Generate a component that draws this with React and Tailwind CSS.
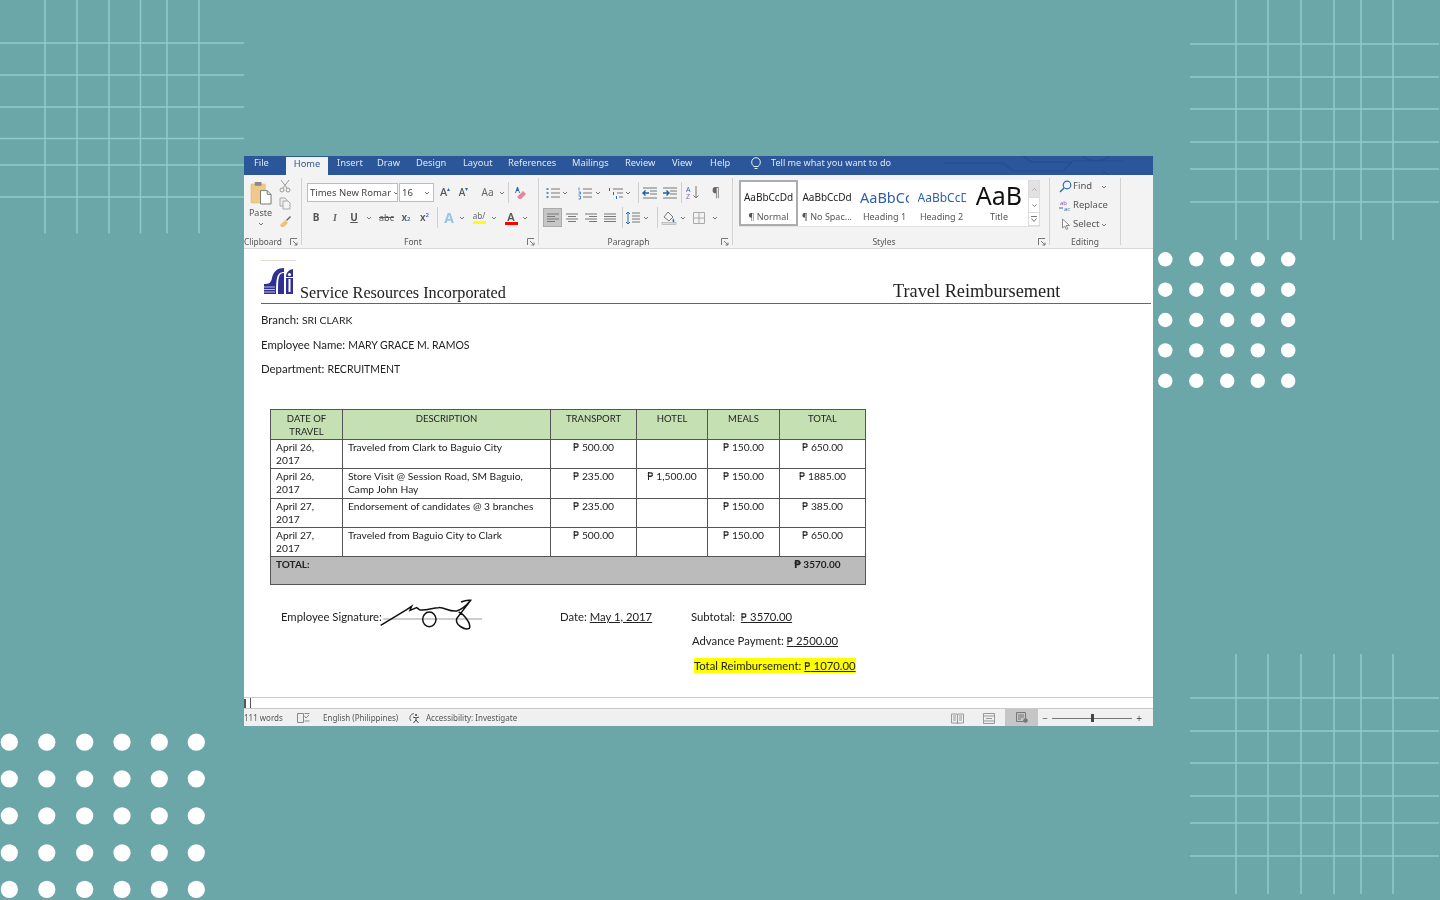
import React from "react";

const Box = ({ c = "", children }) => <div className={"flex items-center justify-center shrink-0 " + c}>{children}</div>;
const Chev = ({ c = "w-[8px]" }) => (
  <Box c={c}><svg width="6" height="4" viewBox="0 0 6 4"><path d="M1 1l2 2 2-2" fill="none" stroke="#777" strokeWidth="1" /></svg></Box>
);
const VSep = ({ c = "" }) => <div className={"w-px h-[21px] bg-[#cfcfcf] shrink-0 " + c} />;
const Launcher = () => (
  <Box c="w-[14px]"><svg width="8" height="8" viewBox="0 0 8 8"><path d="M.5 7V.5H7M3 3l4 4M4.5 7H7V4.5" fill="none" stroke="#777" strokeWidth="1" /></svg></Box>
);
const GroupSep = () => <div className="w-px bg-[#d2d2d2] my-[3px] shrink-0" />;
const Label = ({ children }) => <div className="flex-1 text-center text-[8.5px] leading-[12px] text-[#555]">{children}</div>;

const Bullets = () => (
  <svg width="16" height="14" viewBox="0 0 16 14">
    <path d="M6 3h9M6 7h9M6 11h9" stroke="#777" /><path d="M1.5 3h2M1.5 7h2M1.5 11h2" stroke="#2b6cb0" strokeWidth="1.6" />
  </svg>
);
const Numbered = () => (
  <svg width="16" height="14" viewBox="0 0 16 14">
    <path d="M6 3h9M6 7h9M6 11h9" stroke="#777" /><path d="M2 1.5v3M1.5 6h2v2h-2M1.5 10h2v3h-2" stroke="#2b6cb0" fill="none" strokeWidth=".8" />
  </svg>
);
const Multi = () => (
  <svg width="16" height="14" viewBox="0 0 16 14">
    <path d="M5 3h10M9 7h6M11 11h4" stroke="#777" /><path d="M1.5 2v3M5.5 6v3M8.5 10v3" stroke="#2b6cb0" />
  </svg>
);
const Indent = ({ flip }) => (
  <svg width="16" height="14" viewBox="0 0 16 14">
    <path d="M1 2h14M8 5h7M8 8h7M1 12h14" stroke="#777" />
    {flip ? <path d="M7 7H1.5M3.5 4.5L1 7l2.500 2.500" stroke="#1f5fa8" strokeWidth="1.4" fill="none" /> : <path d="M1 7h5.500M4.500 4.500L7 7 4.500 9.500" stroke="#1f5fa8" strokeWidth="1.4" fill="none" />}
  </svg>
);
const Align = ({ kind }) => {
  const d = {
    left: "M2 3h12M2 5.500h8M2 8h12M2 10.500h8",
    center: "M2 3h12M4 5.500h8M2 8h12M4 10.500h8",
    right: "M2 3h12M6 5.500h8M2 8h12M6 10.500h8",
    justify: "M2 3h12M2 5.500h12M2 8h12M2 10.500h12",
  }[kind];
  return <svg width="16" height="14" viewBox="0 0 16 14"><path d={d} stroke="#777" /></svg>;
};

const Ribbon = () => (
  <div className="flex h-[74px] bg-[#f3f3f3] border-b border-[#d8d8d8] text-[#555]">
    {/* Clipboard */}
    <div className="w-[57px] flex flex-col shrink-0">
      <div className="h-[61px] flex">
        <div className="w-[33px] flex flex-col items-center pt-[6px]">
          <svg width="22" height="24" viewBox="0 0 23 25">
            <rect x="1" y="3" width="15" height="20" rx="1" fill="#efc98a" stroke="#d9b070" strokeWidth=".5" />
            <rect x="5" y="1" width="7" height="4" fill="#8a8a8a" />
            <path d="M11 10h7l4 4v10H11z" fill="#fff" stroke="#777" />
            <path d="M18 10v4h4" fill="none" stroke="#777" />
          </svg>
          <span className="text-[9px] leading-[13px] mt-[1px]">Paste</span>
          <Chev c="w-[8px] h-[9px]" />
        </div>
        <div className="flex-1 flex flex-col items-center pt-[3px] gap-[3px] pr-[8px]">
          <Box c="h-[15px]"><svg width="12" height="14" viewBox="0 0 12 14"><path d="M2 1l6 8M10 1L4 9" stroke="#999" /><circle cx="3" cy="11" r="2" fill="none" stroke="#999" /><circle cx="9" cy="11" r="2" fill="none" stroke="#999" /></svg></Box>
          <Box c="h-[15px]"><svg width="12" height="13" viewBox="0 0 12 13"><path d="M1 1h5l2 2v6H1z" fill="#eee" stroke="#aaa" /><path d="M4 4h5l2 2v6H4z" fill="#f3f3f3" stroke="#aaa" /></svg></Box>
          <Box c="h-[15px]"><svg width="13" height="13" viewBox="0 0 13 13"><path d="M1 10l5-5 3 3-4 4H2z" fill="#eec27a" /><path d="M7 5l4-4 1 1-4 4z" fill="#666" /></svg></Box>
        </div>
      </div>
      <div className="flex h-[12px]">
        <div className="flex-1 text-[8.3px] leading-[12px] whitespace-nowrap">Clipboard</div>
        <Launcher />
      </div>
    </div>
    <GroupSep />
    {/* Font */}
    <div className="w-[236px] flex flex-col shrink-0">
      <div className="h-[61px] pt-[8px] pl-[5px]">
        <div className="flex h-[19px] items-center">
          <div className="w-[91px] h-[19px] bg-white border border-[#bdbdbd] flex items-center pl-[2px] pt-[1px] text-[9.5px] text-[#444] whitespace-nowrap overflow-hidden">
            <span className="flex-1">Times New Romar</span><Chev c="w-[9px]" />
          </div>
          <div className="w-[35px] h-[19px] ml-[1px] bg-white border border-[#bdbdbd] flex items-center pl-[2px] pt-[1px] text-[9.5px] text-[#444]">
            <span className="flex-1">16</span><Chev c="w-[12px]" />
          </div>
          <Box c="w-[18px] ml-[2px] text-[11px] font-medium">A<span className="text-[6px] text-[#2b6cb0] -mt-[6px]">▴</span></Box>
          <Box c="w-[19px] text-[10px] font-medium">A<span className="text-[6px] text-[#2b6cb0] -mt-[6px]">▾</span></Box>
          <Box c="w-[21px] ml-[4px] text-[10px] text-[#666]">Aa</Box>
          <Chev c="w-[8px]" />
          <VSep c="ml-[2px]" />
          <Box c="w-[23px]">
            <svg width="13" height="14" viewBox="0 0 13 14"><path d="M3 1L1 7h1l.6-2h2L5 7h1L4 1z" fill="#2b6cb0" /><path d="M3 11l6-6 3 3-5 5H5z" fill="#e8859a" /></svg>
          </Box>
        </div>
        <div className="flex h-[19px] items-center mt-[6px]">
          <Box c="w-[18px] text-[10px] font-bold text-[#555]">B</Box>
          <Box c="w-[20px] text-[10px] italic font-bold text-[#666] font-['Liberation_Serif']">I</Box>
          <Box c="w-[18px] text-[10px] font-bold underline">U</Box>
          <Chev c="w-[12px]" />
          <Box c="w-[21px] ml-[1px] text-[9px] line-through">abc</Box>
          <Box c="w-[18px] text-[10px] font-semibold">x<sub className="text-[6px] text-[#2b6cb0] leading-none">2</sub></Box>
          <Box c="w-[19px] text-[10px] font-semibold">x<sup className="text-[6px] text-[#2b6cb0] leading-none">2</sup></Box>
          <VSep c="ml-[3px]" />
          <Box c="w-[14px] ml-[4px] text-[14px] font-bold text-[#9cc3ea]">A</Box>
          <Chev c="w-[12px]" />
          <div className="w-[20px] ml-[1px] flex flex-col items-center shrink-0">
            <span className="text-[8px] leading-[10px] text-[#666]">ab/</span><div className="w-[13px] h-[3px] bg-[#ffff00]" />
          </div>
          <Chev c="w-[10px]" />
          <div className="w-[18px] ml-[3px] flex flex-col items-center shrink-0">
            <span className="text-[11px] leading-[11px] font-semibold text-[#555]">A</span><div className="w-[13px] h-[3px] bg-[#ff0000]" />
          </div>
          <Chev c="w-[10px]" />
        </div>
      </div>
      <div className="flex h-[12px]"><Label>Font</Label><Launcher /></div>
    </div>
    <GroupSep />
    {/* Paragraph */}
    <div className="w-[193px] flex flex-col shrink-0">
      <div className="h-[61px] pt-[8px]">
        <div className="flex h-[19px] items-center pl-[6px]">
          <Box c="w-[16px]"><Bullets /></Box><Chev />
          <Box c="w-[16px] ml-[8px]"><Numbered /></Box><Chev c="w-[8px] ml-[1px]" />
          <Box c="w-[16px] ml-[6px]"><Multi /></Box><Chev />
          <VSep c="ml-[6px]" />
          <Box c="w-[16px] ml-[3px]"><Indent flip /></Box>
          <Box c="w-[16px] ml-[4px]"><Indent /></Box>
          <VSep c="ml-[3px]" />
          <Box c="w-[16px] ml-[3px]">
            <svg width="16" height="15" viewBox="0 0 16 15"><text x="1" y="7" fontSize="7" fill="#2b6cb0" fontFamily="Open Sans">A</text><text x="1" y="14" fontSize="7" fill="#8f5fb8" fontFamily="Open Sans">Z</text><path d="M11 1v12M8.500 10.500L11 13l2.500-2.500" fill="none" stroke="#777" /></svg>
          </Box>
          <Box c="w-[16px] ml-[7px] text-[12px] text-[#666]">¶</Box>
        </div>
        <div className="flex h-[19px] items-center pl-[4px] mt-[6px]">
          <Box c="w-[19px] h-[19px] bg-[#c6c6c6] border border-[#aaaaaa]"><Align kind="left" /></Box>
          <Box c="w-[19px]"><Align kind="center" /></Box>
          <Box c="w-[19px]"><Align kind="right" /></Box>
          <Box c="w-[19px]"><Align kind="justify" /></Box>
          <VSep c="ml-[3px]" />
          <Box c="w-[16px] ml-[2px]">
            <svg width="16" height="14" viewBox="0 0 16 14"><path d="M7 2h8M7 5h8M7 8h8M7 11h8" stroke="#777" /><path d="M3 1v12M1 3l2-2 2 2M1 11l2 2 2-2" fill="none" stroke="#2b6cb0" /></svg>
          </Box>
          <Chev c="w-[8px] ml-[1px]" />
          <VSep c="ml-[7px]" />
          <Box c="w-[16px] ml-[3px]">
            <svg width="16" height="15" viewBox="0 0 16 15"><path d="M3 7l4-5 5 5-4 4z" fill="none" stroke="#777" /><path d="M12 8c1 2 2 3 1 4s-2 0-1-4z" fill="#2b6cb0" /><rect x="1" y="12.500" width="14" height="2" fill="#ddd" stroke="#999" strokeWidth=".5" /></svg>
          </Box>
          <Chev c="w-[8px] ml-[2px]" />
          <Box c="w-[16px] ml-[4px]">
            <svg width="14" height="14" viewBox="0 0 14 14"><path d="M1.500 1.500h11v11h-11zM7 1.500v11M1.500 7h11" fill="none" stroke="#aaa" /></svg>
          </Box>
          <Chev c="w-[8px] ml-[4px]" />
        </div>
      </div>
      <div className="flex h-[12px]"><Label>Paragraph</Label><Launcher /></div>
    </div>
    <GroupSep />
    {/* Styles */}
    <div className="w-[316px] flex flex-col shrink-0">
      <div className="h-[61px] pt-[5px] pl-[6px]">
        <div className="flex w-[301px] h-[47px] bg-white border-b border-[#e2e2e2]">
          <div className="w-[59px] shrink-0 border-2 border-[#adadad] flex flex-col items-center text-center">
            <div className="h-[29px] leading-[31px] text-[10px] text-[#222] whitespace-nowrap">AaBbCcDd</div>
            <div className="text-[9px] leading-[12px] text-[#555]">¶ Normal</div>
          </div>
          <div className="w-[58px] shrink-0 flex flex-col items-center">
            <div className="h-[31px] leading-[35px] text-[10px] text-[#222] whitespace-nowrap">AaBbCcDd</div>
            <div className="text-[9px] leading-[12px] whitespace-nowrap">¶ No Spac...</div>
          </div>
          <div className="w-[57px] shrink-0 flex flex-col items-center overflow-hidden">
            <div className="h-[31px] w-[49px] overflow-hidden leading-[35px] text-[14.5px] text-[#2f5fa8] whitespace-nowrap">AaBbCcDd</div>
            <div className="text-[9px] leading-[12px] whitespace-nowrap">Heading 1</div>
          </div>
          <div className="w-[57px] shrink-0 flex flex-col items-center overflow-hidden">
            <div className="h-[31px] w-[48px] overflow-hidden leading-[35px] text-[12px] text-[#2f5fa8] whitespace-nowrap">AaBbCcDd</div>
            <div className="text-[9px] leading-[12px] whitespace-nowrap">Heading 2</div>
          </div>
          <div className="w-[58px] shrink-0 flex flex-col items-center overflow-hidden">
            <div className="h-[25px] mt-[3px] w-[48px] overflow-hidden text-center leading-[24px] text-[25px] text-[#111] whitespace-nowrap">AaB</div>
            <div className="text-[9px] leading-[12px] mt-[3px]">Title</div>
          </div>
          <div className="w-[12px] shrink-0 flex flex-col border border-[#dcdcdc]">
            <Box c="h-[16px] bg-[#e2e2e2]"><svg width="5" height="3" viewBox="0 0 5 3"><path d="M.5 2.500L2.500.5l2 2" fill="none" stroke="#aaa" /></svg></Box>
            <Box c="h-[15px] border-t border-[#dcdcdc]"><svg width="5" height="3" viewBox="0 0 5 3"><path d="M.5.5l2 2 2-2" fill="none" stroke="#777" /></svg></Box>
            <Box c="flex-1 border-t border-[#dcdcdc]"><svg width="6" height="6" viewBox="0 0 6 6"><path d="M0 .5h6M.5 2.500l2.500 3 2.500-3" fill="none" stroke="#777" /></svg></Box>
          </div>
        </div>
      </div>
      <div className="flex h-[12px]"><Label>Styles</Label><Launcher /></div>
    </div>
    <GroupSep />
    {/* Editing */}
    <div className="w-[70px] flex flex-col shrink-0">
      <div className="h-[61px] pt-[2px] text-[9.5px] text-[#555]">
        <div className="flex items-center h-[19px] pl-[8px]">
          <Box c="w-[15px]"><svg width="13" height="13" viewBox="0 0 13 13"><circle cx="8" cy="5" r="3.800" fill="none" stroke="#2b6cb0" strokeWidth="1.200" /><path d="M5 8l-4 4" stroke="#2b6cb0" strokeWidth="1.500" /></svg></Box>
          <span className="w-[27px]">Find</span><Chev />
        </div>
        <div className="flex items-center h-[19px] pl-[8px]">
          <Box c="w-[15px]"><svg width="13" height="13" viewBox="0 0 13 13"><text x="1" y="5.500" fontSize="6" fill="#7a4fa8" fontFamily="Open Sans">ab</text><text x="5" y="12" fontSize="6" fill="#2b6cb0" fontFamily="Open Sans">ac</text><path d="M0 9h4" stroke="#2b6cb0" /></svg></Box>
          <span className="whitespace-nowrap">Replace</span>
        </div>
        <div className="flex items-center h-[19px] pl-[8px]">
          <Box c="w-[15px]"><svg width="10" height="13" viewBox="0 0 10 13"><path d="M1.500 1v9l2.200-2 1.600 3.500 1.500-.7L5.200 7.500H8.500z" fill="#fff" stroke="#8a8a8a" /></svg></Box>
          <span>Select</span><Chev c="w-[8px] ml-[1px]" />
        </div>
      </div>
      <div className="flex h-[12px]"><Label>Editing</Label></div>
    </div>
    <GroupSep />
  </div>
);

const Tab = ({ c, children }) => <div className={"shrink-0 whitespace-nowrap " + c}>{children}</div>;

const TitleBar = () => (
  <div className="relative h-[19px] bg-[#2b579a] flex text-[9.3px] leading-[14px] text-[#dfe7f3] overflow-hidden">
    <svg className="absolute right-0 top-0" width="220" height="19" viewBox="0 0 220 19">
      <path d="M10 7h60l10 8h50l10-10h50M90 0l8 6h40M170 15l6 4M150 0c4 6 22 6 26 0" fill="none" stroke="#244d8d" strokeWidth="1.200" />
    </svg>
    <Tab c="relative w-[42px] pl-[10px]">File</Tab>
    <Tab c="relative w-[42px] h-[18px] mt-[1px] bg-[#f3f3f3] text-[#2b579a] text-center">Home</Tab>
    <Tab c="relative w-[40px] ml-[9px]">Insert</Tab>
    <Tab c="relative w-[39px]">Draw</Tab>
    <Tab c="relative w-[47px]">Design</Tab>
    <Tab c="relative w-[45px]">Layout</Tab>
    <Tab c="relative w-[64px]">References</Tab>
    <Tab c="relative w-[53px]">Mailings</Tab>
    <Tab c="relative w-[47px]">Review</Tab>
    <Tab c="relative w-[38px]">View</Tab>
    <Tab c="relative w-[38px]">Help</Tab>
    <Box c="relative w-[16px] h-[15px]">
      <svg width="10" height="13" viewBox="0 0 10 13"><path d="M3 9.500C1 8 .7 6.500.7 5a4.300 4.300 0 018.600 0c0 1.500-.3 3-2.300 4.500zM3.500 11.500h3" fill="none" stroke="#e6ecf6" strokeWidth="1" /></svg>
    </Box>
    <Tab c="relative ml-[7px] text-[9.1px]">Tell me what you want to do</Tab>
  </div>
);

const P = () => <span className="font-['DejaVu_Sans'] text-[10px] leading-none">₱</span>;
const rows = [
  ["April 26, 2017", "Traveled from Clark to Baguio City", "500.00", "", "150.00", "650.00", "h-[29px]"],
  ["April 26, 2017", "Store Visit @ Session Road, SM Baguio, Camp John Hay", "235.00", "1,500.00", "150.00", "1885.00", "h-[30px]"],
  ["April 27, 2017", "Endorsement of candidates @ 3 branches", "235.00", "", "150.00", "385.00", "h-[29px]"],
  ["April 27, 2017", "Traveled from Baguio City to Clark", "500.00", "", "150.00", "650.00", "h-[29px]"],
];
const cell = "border border-[#555] align-top px-[5px] pt-[1px] pb-0";
const head = "border border-[#555] align-top px-[5px] pt-[2px] pb-0 text-[9.5px]";

const Money = ({ v }) => (v ? <span className="whitespace-nowrap"><P /> {v}</span> : null);

const Doc = () => (
  <div className="h-[448px] bg-white font-['Lato','sans-serif'] text-[#222] overflow-hidden">
    <div className="ml-[17px] mr-[2px] h-[55px] border-b border-[#666] flex items-end pb-[1px]">
      <div className="w-[39px] h-[42px] flex flex-col shrink-0">
        <div className="w-[35px] h-px bg-[#e6dcd2]" />
        <svg className="ml-[3px] mt-[6px]" width="29" height="28" viewBox="0 0 29 28">
          <path d="M0 27V17c5 0 7-1 8-6S12 1 20 1v4c-4 0-6 2-7 6s-1 12-1 16z" fill="#2e3192" />
          <path d="M0 20h11M0 22.500h11M0 25h11" stroke="#fff" strokeWidth=".7" />
          <path d="M14 27c0-8 0-14 1-17s2-4 5-4v21z" fill="#2e3192" />
          <rect x="22" y="11" width="7" height="16" fill="#2e3192" />
          <path d="M22 10c0-4 2-7 7-8v8z" fill="#2e3192" />
          <circle cx="25.500" cy="7.500" r="1.600" fill="#fff" />
          <rect x="24.500" y="12" width="2" height="13" fill="#fff" />
        </svg>
      </div>
      <div className="flex-1 font-['Liberation_Serif','serif'] text-[16.2px] leading-[18px] text-[#222]">Service Resources Incorporated</div>
      <div className="w-[258px] font-['Liberation_Serif','serif'] text-[18.3px] leading-[20px] pb-[1px] text-[#222]">Travel Reimbursement</div>
    </div>
    <div className="ml-[17px] mt-[4px] text-[11.4px] leading-[24.500px]">
      <div>Branch: <span className="text-[10.4px]">SRI CLARK</span></div>
      <div>Employee Name: <span className="text-[10.5px]">MARY GRACE M. RAMOS</span></div>
      <div>Department: <span className="text-[10.5px]">RECRUITMENT</span></div>
    </div>
    <table className="ml-[26px] mt-[27px] w-[595px] table-fixed border-collapse text-[10.25px] leading-[13.500px]">
      <colgroup>
        <col className="w-[72px]" /><col className="w-[208px]" /><col className="w-[86px]" /><col className="w-[71px]" /><col className="w-[72px]" /><col className="w-[86px]" />
      </colgroup>
      <tbody>
        <tr className="h-[30px] bg-[#c5e0b3] text-center">
          {["DATE OF TRAVEL", "DESCRIPTION", "TRANSPORT", "HOTEL", "MEALS", "TOTAL"].map((h) => <td key={h} className={head}>{h}</td>)}
        </tr>
        {rows.map((r, i) => (
          <tr key={i} className={r[6]}>
            <td className={cell}>{r[0]}</td>
            <td className={cell}>{r[1]}</td>
            <td className={cell + " text-center"}><Money v={r[2]} /></td>
            <td className={cell + " text-center"}><Money v={r[3]} /></td>
            <td className={cell + " text-center"}><Money v={r[4]} /></td>
            <td className={cell + " text-center"}><Money v={r[5]} /></td>
          </tr>
        ))}
        <tr className="h-[28px] bg-[#bbbbbb] font-bold">
          <td colSpan={5} className={cell + " border-r-0 text-[10px]"}>TOTAL:</td>
          <td className={cell + " border-l-0 text-center text-[10px] !pr-[15px]"}><Money v="3570.00" /></td>
        </tr>
      </tbody>
    </table>
    <div className="flex text-[11.3px] leading-[24.500px] mt-[20px]">
      <div className="w-[316px] h-[24.500px] pl-[37px] flex shrink-0">
        <span className="whitespace-nowrap">Employee Signature:</span>
        <svg className="-mt-[8px] -ml-[4px] shrink-0" width="110" height="40" viewBox="354 30 330 120">
          <path d="M370 96H666" stroke="#888" strokeWidth="2.500" fill="none" />
          <path d="M362 115L440 68l15-10-5 12 20-8 8 6c17 4 42-6 57-6 20-2 30 13 55 10 15-4 30-17 42-32-12-2-22 2-29 5M632 40L590 95c-5 20 25 35 38 29 7-14-18-44-32-49" stroke="#111" strokeWidth="4.500" fill="none" />
          <ellipse cx="508" cy="97" rx="20" ry="22" stroke="#111" strokeWidth="4.500" fill="none" />
        </svg>
      </div>
      <div className="w-[131px] h-[24.500px] shrink-0 whitespace-nowrap">Date: <span className="underline">May 1, 2017</span></div>
      <div className="flex flex-col whitespace-nowrap">
        <div className="h-[24.500px]">Subtotal:&nbsp; <span className="underline"><P /> 3570.00</span></div>
        <div className="h-[24.500px] ml-[1px]">Advance Payment: <span className="underline"><P /> 2500.00</span></div>
        <div className="h-[24.500px] ml-[3px]"><span className="bg-[#ffff00] py-[1px]">Total Reimbursement: <span className="underline"><P /> 1070.00</span></span></div>
      </div>
    </div>
  </div>
);

const BottomBars = () => (
  <>
    <div className="h-[12px] bg-white border-t border-[#c9c9c9] border-b flex items-center">
      <div className="w-[2px] h-[9px] bg-[#555]" />
      <div className="w-px h-[10px] bg-[#555] ml-[4px]" />
    </div>
    <div className="h-[17px] pt-[1px] bg-[#f0f0f0] flex items-center text-[8px] text-[#555] whitespace-nowrap">
      <div className="w-[51px]">111 words</div>
      <Box c="w-[16px]"><svg width="13" height="10" viewBox="0 0 13 10"><path d="M.5.5h6v9h-6zM7.500.5h5M7.500 3l1.500 2 3-3M7.500 8h5" fill="none" stroke="#888" /></svg></Box>
      <div className="ml-[12px] w-[83px]">English (Philippines)</div>
      <Box c="w-[16px]"><svg width="13" height="12" viewBox="0 0 13 12"><path d="M6 1.500a4.500 4.500 0 00-3 7.500" fill="none" stroke="#666" /><circle cx="8" cy="3" r="1" fill="#444" /><path d="M5 5l3 1 3-1M8 6v2L5.500 11M8 8l2.500 3" fill="none" stroke="#444" /></svg></Box>
      <div className="ml-[4px]">Accessibility: Investigate</div>
      <div className="flex-1" />
      <Box c="w-[32px]"><svg width="13" height="11" viewBox="0 0 13 11"><path d="M.5 1h5.500l.5 1 .5-1h5.500v9H7l-.5 1-.5-1H.5z M6.500 2v8M2 3h3M2 5h3M2 7h3M8 3h3M8 5h3M8 7h3" fill="none" stroke="#999" /></svg></Box>
      <Box c="w-[32px]"><svg width="12" height="11" viewBox="0 0 12 11"><path d="M.5.500h11v10H.5zM.5 3h11M.5 8h11M3 5.500h6" fill="none" stroke="#999" /></svg></Box>
      <Box c="w-[33px] h-[17px] -mt-[1px] bg-[#c6c6c6]"><svg width="12" height="11" viewBox="0 0 12 11"><path d="M.5.500h9v9H.5zM2 3h6M2 5h6M2 7h3" fill="none" stroke="#777" /><circle cx="9.500" cy="8.500" r="2.300" fill="#777" /></svg></Box>
      <Box c="w-[14px] text-[10px] leading-none">−</Box>
      <div className="w-[80px] h-px bg-[#777] flex justify-center items-center">
        <div className="w-[3px] h-[8px] bg-[#444]" />
      </div>
      <Box c="w-[14px] text-[10px] leading-none">+</Box>
      <div className="w-[7px]" />
    </div>
  </>
);

const GridLines = ({ c, w, h, xs, ys, x1, y1 }) => (
  <svg className={"absolute " + c} width={w} height={h} viewBox={`0 0 ${w} ${h}`}>
    {xs.map((x) => <line key={"x" + x} x1={x} x2={x} y1={0} y2={y1} stroke="#8fcbca" strokeWidth="1.500" />)}
    {ys.map((y) => <line key={"y" + y} y1={y} y2={y} x1={0} x2={x1} stroke="#8fcbca" strokeWidth="1.500" />)}
  </svg>
);

const Dots = ({ c, w, h, xs, ys, r }) => (
  <svg className={"absolute " + c} width={w} height={h} viewBox={`0 0 ${w} ${h}`}>
    {ys.map((y) => xs.map((x) => <circle key={x + "-" + y} cx={x} cy={y} r={r} fill="#fff" />))}
  </svg>
);

export default function App() {
  return (
    <div className="relative w-[1440px] h-[900px] overflow-hidden bg-[#6ba6a8] pt-[156px] pl-[244px] font-['Noto_Sans','sans-serif']">
      <GridLines c="left-0 top-0" w={245} h={234} xs={[45, 77, 109, 140.5, 167, 199]} ys={[43, 75, 107, 138.5, 165, 197]} x1={244} y1={233.5} />
      <GridLines c="left-[1190px] top-0" w={250} h={240} xs={[46, 78, 111, 144, 171, 203]} ys={[44, 77, 109, 142, 169, 202]} x1={249} y1={240} />
      <GridLines c="left-[1190px] top-[654px]" w={250} h={240} xs={[46, 78, 111, 144, 171, 203]} ys={[44, 77, 109, 142, 169, 202]} x1={249} y1={240} />
      <Dots c="left-[1150px] top-[250px]" w={150} h={140} xs={[15.3, 46.3, 77.2, 107.8, 138.2]} ys={[9.3, 39.7, 70, 100.4, 130.8]} r={7.2} />
      <Dots c="left-0 top-[730px]" w={210} h={170} xs={[9.3, 46.8, 84.7, 122, 159.3, 196.3]} ys={[12.2, 48.8, 85.8, 122.8, 159.4]} r={8.6} />
      <div className="relative w-[909px] h-[570px] blur-[0.4px]">
        <TitleBar />
        <Ribbon />
        <Doc />
        <BottomBars />
      </div>
    </div>
  );
}
